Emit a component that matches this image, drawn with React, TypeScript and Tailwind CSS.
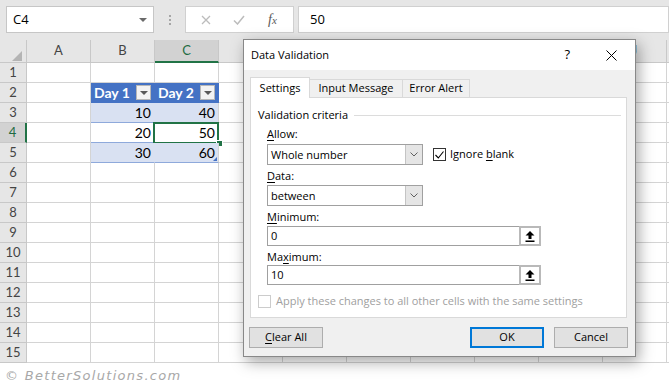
import React from 'react';

const cols = ['A', 'B', 'C', 'D', 'E', 'F', 'G', 'H', 'I', 'J', 'K'];
// letters D..I sit under the dialog and K is off screen, so only the visible ones are printed
const shownLetters = ['A', 'B', 'C', 'J'];
const rows = Array.from({ length: 15 }, (_, i) => i + 1);

const values: Record<string, string> = { B3: '10', C3: '40', B4: '20', C4: '50', B5: '30', C5: '60' };

const FilterButton = () => (
  <span className="absolute right-[3px] top-[2px] w-[15px] h-[15px] bg-[#f3f3f3] border border-[#b7b7b7] flex items-center justify-center">
    <svg width="8" height="4" viewBox="0 0 8 4">
      <path d="M0 0h8L4 4z" fill="#595959" />
    </svg>
  </span>
);

const Cell = ({ r, c }: { r: number; c: string }) => {
  const key = c + r;
  const inTable = (c === 'B' || c === 'C') && r >= 2 && r <= 5;

  if (inTable && r === 2) {
    return (
      <div className="relative w-[64px] h-[20px] shrink-0 bg-[#4472c4] border-r border-b border-[#4472c4] pl-[3px] text-white font-bold text-[14px] leading-[19px]">
        {c === 'B' ? 'Day 1' : 'Day 2'}
        <FilterButton />
      </div>
    );
  }

  if (inTable) {
    const banded = r !== 4;
    return (
      <div
        className={
          banded
            ? c === 'B'
              ? 'relative w-[64px] h-[20px] shrink-0 bg-[#d9e1f2] border-r border-r-[#d9e1f2] border-b border-b-[#8ea9db] text-right pr-[3px] text-[14px] leading-[19px]'
              : 'relative w-[64px] h-[20px] shrink-0 bg-[#d9e1f2] border-r border-r-[#d4d4d4] border-b border-b-[#8ea9db] text-right pr-[3px] text-[14px] leading-[19px]'
            : c === 'B'
              ? 'relative w-[64px] h-[20px] shrink-0 bg-white border-r border-r-white border-b border-b-[#8ea9db] text-right pr-[3px] text-[14px] leading-[19px]'
              : 'relative w-[64px] h-[20px] shrink-0 bg-white border-r border-r-[#d4d4d4] border-b border-b-[#8ea9db] text-right pr-[3px] text-[14px] leading-[19px]'
        }
      >
        {values[key]}
        {key === 'C4' && (
          <>
            <span className="absolute left-[-2px] top-[-1px] w-[66px] h-[22px] border-2 border-[#217346]" />
            <span className="absolute left-[61px] top-[17px] w-[7px] h-[7px] bg-[#217346] border border-white" />
          </>
        )}
        {key === 'C5' && (
          <svg className="absolute right-[1px] bottom-[1px]" width="4" height="4" viewBox="0 0 4 4">
            <path d="M4 0v4H0z" fill="#4472c4" />
          </svg>
        )}
      </div>
    );
  }

  return <div className="w-[64px] h-[20px] shrink-0 border-r border-b border-[#d4d4d4]" />;
};

const Select = ({ value }: { value: string }) => (
  <div className="flex w-[156px] h-[21px] border border-[#a0a0a0] bg-white">
    <div className="flex-1 pl-[3px] leading-[19px]">{value}</div>
    <div className="w-[17px] bg-[#e5e5e5] border-l border-[#c4c4c4] flex items-center justify-center">
      <svg width="8" height="5" viewBox="0 0 8 5">
        <path d="M0.5 0.5L4 4L7.5 0.5" fill="none" stroke="#606060" strokeWidth="1" />
      </svg>
    </div>
  </div>
);

const RefInput = ({ value }: { value: string }) => (
  <div className="flex w-[274px] h-[20px] border border-[#a0a0a0] bg-white">
    <div className="flex-1 pl-[3px] leading-[18px]">{value}</div>
    <div className="w-[22px] h-[20px] -my-px -mr-px border-2 border-[#b9b9b9] bg-white flex items-center justify-center">
      <svg width="10" height="11" viewBox="0 0 10 11">
        <path d="M5 0L9.5 4.5H6.5V8H3.5V4.5H0.5Z" fill="#000" />
        <rect x="0.5" y="9.5" width="9" height="1.5" fill="#000" />
      </svg>
    </div>
  </div>
);

const Label = ({ pre, u, post }: { pre?: string; u: string; post: string }) => (
  <div className="mt-[3px] h-[16px] leading-[16px]">
    {pre}
    <span className="underline underline-offset-2">{u}</span>
    {post}
  </div>
);

export default function App() {
  return (
    <div className="relative w-[669px] h-[385px] overflow-hidden bg-white text-black font-['Lato',sans-serif]">
      {/* formula bar */}
      <div className="h-[40px] bg-[#e6e6e6] flex items-start pt-[6px] pl-[6px] font-['Open_Sans',sans-serif] text-[13px]">
        <div className="w-[148px] h-[27px] shrink-0 bg-white border border-[#c6c6c6] flex items-center pl-[6px] pr-[6px]">
          <span>C4</span>
          <svg className="ml-auto" width="8" height="4" viewBox="0 0 8 4">
            <path d="M0 0h8L4 4z" fill="#6a6a6a" />
          </svg>
        </div>
        <div className="w-[31px] h-[27px] shrink-0 flex flex-col items-center justify-center gap-[2px]">
          <span className="w-[2px] h-[2px] bg-[#a6a6a6]" />
          <span className="w-[2px] h-[2px] bg-[#a6a6a6]" />
          <span className="w-[2px] h-[2px] bg-[#a6a6a6]" />
        </div>
        <div className="w-[109px] h-[27px] shrink-0 bg-white border border-[#d0d0d0] flex items-center">
          <svg className="ml-[15px]" width="10" height="10" viewBox="0 0 10 10">
            <path d="M1 1L9 9M9 1L1 9" stroke="#bcbcbc" strokeWidth="1.3" />
          </svg>
          <svg className="ml-[22px]" width="12" height="10" viewBox="0 0 12 10">
            <path d="M1 5.5L4.5 9L11 1" fill="none" stroke="#bcbcbc" strokeWidth="1.5" />
          </svg>
          <span className="ml-[23px] font-['Liberation_Serif',serif] italic text-[14px] text-[#595959]">
            f<span className="text-[11px]">x</span>
          </span>
        </div>
        <div className="ml-[4px] flex-1 h-[27px] bg-white border border-[#d0d0d0] flex items-center pl-[11px]">50</div>
      </div>

      {/* column headers */}
      <div className="flex h-[23px] bg-[#e6e6e6] text-[13px] text-[#444]">
        <div className="relative w-[27px] h-[23px] shrink-0 border-r border-b border-[#c8c8c8]">
          <svg className="absolute left-[12px] top-[11px]" width="10" height="10" viewBox="0 0 10 10">
            <path d="M10 0V10H0Z" fill="#b4b4b4" />
          </svg>
        </div>
        {cols.map((c) =>
          c === 'C' ? (
            <div
              key={c}
              className="w-[64px] h-[23px] shrink-0 bg-[#d2d2d2] border-r border-r-[#c8c8c8] border-b-2 border-b-[#217346] flex items-center justify-center text-[#1e6b41]"
            >
              {c}
            </div>
          ) : (
            <div key={c} className="w-[64px] h-[23px] shrink-0 border-r border-b border-[#c8c8c8] flex items-center justify-center">
              {shownLetters.includes(c) ? c : null}
            </div>
          )
        )}
      </div>

      {/* rows */}
      {rows.map((r) => (
        <div key={r} className="flex h-[20px]">
          {r === 4 ? (
            <div className="w-[27px] h-[20px] shrink-0 bg-[#d2d2d2] border-r-2 border-r-[#217346] border-b border-b-[#c8c8c8] text-[13px] leading-[19px] text-center text-[#1e6b41]">
              {r}
            </div>
          ) : (
            <div className="w-[27px] h-[20px] shrink-0 bg-[#e6e6e6] border-r border-b border-[#c8c8c8] text-[13px] leading-[19px] text-center text-[#444]">
              {r}
            </div>
          )}
          {cols.map((c) => (
            <Cell key={c} r={r} c={c} />
          ))}
        </div>
      ))}

      <div className="pl-[5px] pt-[3px] font-['DejaVu_Sans',sans-serif] italic text-[13px] tracking-[1.3px] text-[#a8a8a8]">
        © BetterSolutions.com
      </div>

      {/* Data Validation dialog */}
      <div className="absolute left-[243px] top-[39px] w-[393px] h-[318px] border border-[#888] bg-[#f0f0f0] shadow-[3px_5px_14px_rgba(0,0,0,0.35)] flex flex-col font-['Open_Sans',sans-serif] text-[11px] text-black">
        <div className="h-[30px] shrink-0 bg-white flex items-center pl-[7px]">
          <span className="text-[11px]">Data Validation</span>
          <span className="ml-auto text-[13px] mr-[36px]">?</span>
          <svg className="mr-[18px]" width="11" height="11" viewBox="0 0 11 11">
            <path d="M0.5 0.5L10.5 10.5M10.5 0.5L0.5 10.5" stroke="#000" strokeWidth="1" />
          </svg>
        </div>

        <div className="pl-[6px] pt-[7px] flex flex-col">
          <div className="flex items-end h-[21px] -mb-px relative z-10">
            <div className="w-[60px] h-[21px] bg-white border border-b-0 border-[#d9d9d9] flex items-center justify-center">
              Settings
            </div>
            <div className="w-[93px] h-[19px] border-t border-r border-b border-[#d9d9d9] flex items-center justify-center">
              Input Message
            </div>
            <div className="w-[67px] h-[19px] border-t border-r border-b border-[#d9d9d9] flex items-center justify-center">
              Error Alert
            </div>
          </div>

          <div className="w-[377px] h-[221px] bg-white border border-[#d9d9d9] pt-[9px]">
            <div className="flex items-center h-[16px] pl-[7px] pr-[5px]">
              <span>Validation criteria</span>
              <span className="flex-1 h-px bg-[#dcdcdc] ml-[6px]" />
            </div>

            <div className="pl-[16px]">
              <Label u="A" post="llow:" />
              <div className="mt-[2px] flex items-center">
                <Select value="Whole number" />
                <span className="ml-[10px] w-[13px] h-[13px] border border-[#333] bg-white flex items-center justify-center">
                  <svg width="9" height="8" viewBox="0 0 9 8">
                    <path d="M0.5 4L3.3 7L8.5 0.5" fill="none" stroke="#000" strokeWidth="1.1" />
                  </svg>
                </span>
                <span className="ml-[4px]">
                  Ignore <span className="underline underline-offset-2">b</span>lank
                </span>
              </div>

              <Label u="D" post="ata:" />
              <div className="mt-[1px]">
                <Select value="between" />
              </div>

              <Label u="M" post="inimum:" />
              <div className="mt-[1px]">
                <RefInput value="0" />
              </div>

              <Label pre="Ma" u="x" post="imum:" />
              <RefInput value="10" />
            </div>

            <div className="mt-[8px] h-[16px] flex items-center pl-[7px] text-[#a0a0a0]">
              <span className="w-[13px] h-[13px] border border-[#cccccc] bg-white" />
              <span className="ml-[5px]">Apply these changes to all other cells with the same settings</span>
            </div>
          </div>

          <div className="mt-[9px] flex w-[379px] -ml-px">
            <div className="w-[74px] h-[21px] bg-[#e1e1e1] border border-[#adadad] flex items-center justify-center">
              <span>
                <span className="underline underline-offset-2">C</span>lear All
              </span>
            </div>
            <div className="ml-auto w-[74px] h-[21px] bg-[#e1e1e1] border-2 border-[#0078d7] flex items-center justify-center">OK</div>
            <div className="ml-[10px] w-[74px] h-[21px] bg-[#e1e1e1] border border-[#adadad] flex items-center justify-center">
              Cancel
            </div>
          </div>
        </div>
      </div>
    </div>
  );
}
